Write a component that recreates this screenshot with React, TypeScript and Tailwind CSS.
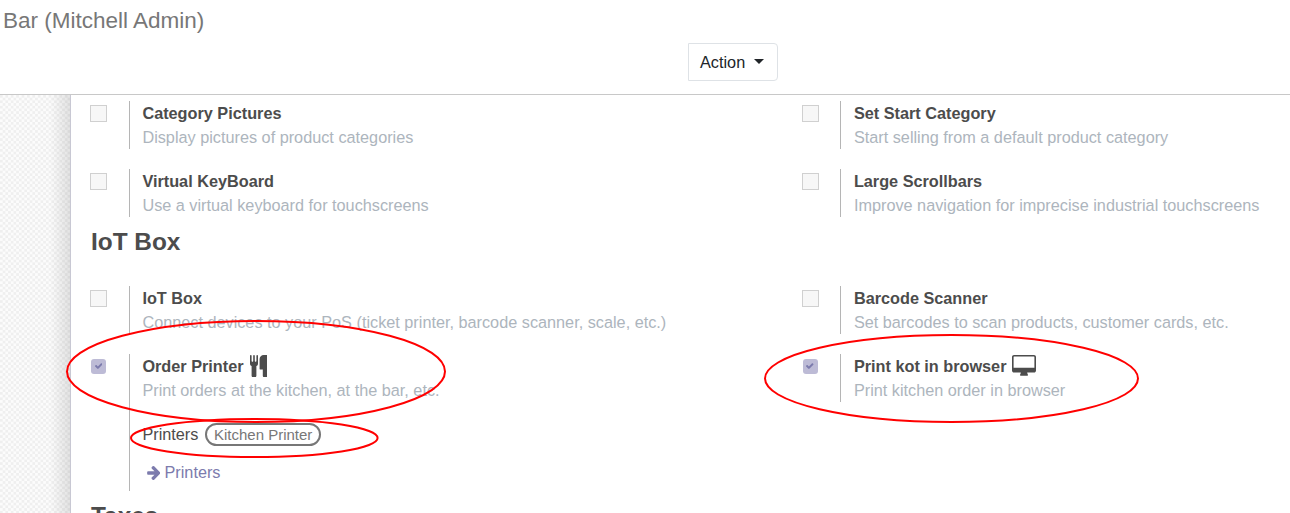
import type { ReactNode } from "react";

function Cutlery() {
  return (
    <svg className="ml-[6px] h-[22.4px] w-[17.6px] shrink-0" viewBox="192 0 1408 1792" fill="currentColor">
      <path d="M832 64v640q0 61-35.5 111t-92.5 70v779q0 52-38 90t-90 38h-128q-52 0-90-38t-38-90v-779q-57-20-92.5-70t-35.5-111v-640q0-26 19-45t45-19 45 19 19 45v416q0 26 19 45t45 19 45-19 19-45v-416q0-26 19-45t45-19 45 19 19 45v416q0 26 19 45t45 19 45-19 19-45v-416q0-26 19-45t45-19 45 19 19 45zm768 0v1600q0 52-38 90t-90 38h-128q-52 0-90-38t-38-90v-512h-224q-13 0-22.5-9.5t-9.5-22.5v-800q0-132 94-226t226-94h256q26 0 45 19t19 45z" />
    </svg>
  );
}

function Desktop() {
  return (
    <svg className="mb-px ml-[6px] h-[20.8px] w-6 shrink-0" viewBox="-64 0 1920 1664" fill="currentColor">
      <path d="M1728 992v-832q0-13-9.5-22.5t-22.5-9.5h-1600q-13 0-22.5 9.5t-9.5 22.5v832q0 13 9.5 22.5t22.5 9.5h1600q13 0 22.5-9.5t9.5-22.5zm128-832v1088q0 66-47 113t-113 47h-544q0 37 16 77.5t32 71 16 43.5q0 26-19 45t-45 19h-512q-26 0-45-19t-19-45q0-14 16-44t32-70 16-78h-544q-66 0-113-47t-47-113v-1088q0-66 47-113t113-47h1600q66 0 113 47t47 113z" />
    </svg>
  );
}

function ArrowRight() {
  return (
    <svg className="mt-px h-[14px] w-[13.5px] shrink-0" viewBox="0 179 1472 1560" fill="currentColor">
      <path d="M1472 960q0 54-37 91l-651 651q-39 37-91 37-51 0-90-37l-75-75q-38-38-38-91t38-91l293-293h-704q-52 0-84.5-37.5t-32.5-90.5v-128q0-53 32.5-90.5t84.5-37.5h704l-293-294q-38-36-38-90t38-90l75-75q38-38 90-38 53 0 91 38l651 651q37 35 37 90z" />
    </svg>
  );
}

function Checkbox({ checked }: { checked?: boolean }) {
  if (checked) {
    return (
      <div className="mt-[5px] ml-px flex h-[15px] w-[15px] items-center justify-center rounded-[3px] bg-[#bdbbd6]">
        <svg className="mb-[2px] h-[6px] w-[7.5px]" viewBox="121 310 1550 1212" fill="#7c7bad">
          <path d="M1671 566q0 40-28 68l-724 724-136 136q-28 28-68 28t-68-28l-136-136-362-362q-28-28-28-68t28-68l136-136q28-28 68-28t68 28l294 295 656-657q28-28 68-28t68 28l136 136q28 28 28 68z" />
        </svg>
      </div>
    );
  }
  return <div className="mt-1 h-[17px] w-[17px] border border-[#d0d0d0] bg-[#f7f7f7]" />;
}

type SettingProps = { title: string; help: string; checked?: boolean; icon?: ReactNode; children?: ReactNode };

function Setting({ title, help, checked, icon, children }: SettingProps) {
  return (
    <div className="flex w-[711.5px] shrink-0 items-start">
      <div className="w-[38.8px] shrink-0">
        <Checkbox checked={checked} />
      </div>
      <div className="border-l border-[#b5b5b5] pl-[12.6px] whitespace-nowrap">
        <div className="flex h-6 items-center font-bold">
          {title}
          {icon}
        </div>
        <div className="h-6 text-[#adb5bd]">{help}</div>
        {children}
      </div>
    </div>
  );
}

export default function App() {
  return (
    <div className="relative flex h-[513px] w-[1290px] flex-col overflow-hidden bg-white font-['Liberation_Sans',Arial,sans-serif] text-[16.25px] leading-6 text-[#4c4c4c]">
      <header className="h-[95px] shrink-0 border-b border-[#c8c8c8]">
        <h1 className="h-[43px] pt-1 pl-[3px] text-[22.5px] leading-[33px] text-[#777777]">Bar (Mitchell Admin)</h1>
        <button className="ml-[688px] flex h-[38px] w-[90px] items-center rounded-r-[4px] border border-[#dee2e6] pl-[11px] text-[#212529]">
          Action
          <span className="mb-[2px] ml-[9px] border-x-[5px] border-t-[5px] border-x-transparent border-t-[#212529]" />
        </button>
      </header>
      <div className="flex min-h-0 flex-1">
        <aside className="relative w-[70px] shrink-0 overflow-hidden">
          <svg className="block h-full w-full">
            <defs>
              <pattern id="checker" width="5.4" height="5.4" patternUnits="userSpaceOnUse">
                <rect width="5.4" height="5.4" fill="#fcfcfc" />
                <rect width="2.7" height="2.7" fill="#efefef" />
                <rect x="2.7" y="2.7" width="2.7" height="2.7" fill="#efefef" />
              </pattern>
            </defs>
            <rect width="100%" height="100%" fill="url(#checker)" />
          </svg>
          <div className="absolute inset-y-0 right-0 w-5 bg-linear-to-r from-transparent to-black/10" />
        </aside>
        <main className="min-w-0 flex-1 border-l border-[#c8c8d3] pt-[6px] pl-[19px]">
          <div className="flex h-12">
            <Setting title="Category Pictures" help="Display pictures of product categories" />
            <Setting title="Set Start Category" help="Start selling from a default product category" />
          </div>
          <div className="mt-5 flex h-12">
            <Setting title="Virtual KeyBoard" help="Use a virtual keyboard for touchscreens" />
            <Setting title="Large Scrollbars" help="Improve navigation for imprecise industrial touchscreens" />
          </div>
          <h2 className="mt-[7px] h-[62px] pl-[1px] text-[24.4px] leading-9 font-bold">IoT Box</h2>
          <div className="flex h-12">
            <Setting title="IoT Box" help="Connect devices to your PoS (ticket printer, barcode scanner, scale, etc.)" />
            <Setting title="Barcode Scanner" help="Set barcodes to scan products, customer cards, etc." />
          </div>
          <div className="mt-5 flex h-[137px] items-start">
            <Setting title="Order Printer" help="Print orders at the kitchen, at the bar, etc." checked icon={<Cutlery />}>
              <div className="mt-5 flex h-6 items-center">
                Printers
                <span className="ml-[6.8px] flex h-[23px] w-[116px] items-center justify-center rounded-full border-2 border-[#777777] pt-[2px] text-[15px] text-[#777777]">
                  Kitchen Printer
                </span>
              </div>
              <div className="mt-[14px] flex h-[31px] items-start pl-[4.6px] text-[#7c7bad]">
                <span className="flex h-6 items-center gap-1">
                  <ArrowRight />
                  Printers
                </span>
              </div>
            </Setting>
            <Setting title="Print kot in browser" help="Print kitchen order in browser" checked icon={<Desktop />} />
          </div>
          <h2 className="mt-[7px] pl-[1px] text-[24.4px] leading-9 font-bold">Taxes</h2>
        </main>
      </div>
      <svg className="pointer-events-none absolute inset-0" width="1290" height="513" fill="none" stroke="#ff0000" strokeWidth="2">
        <ellipse cx="256" cy="371.5" rx="189" ry="50.5" />
        <ellipse cx="254.3" cy="438" rx="123.3" ry="19" />
        <ellipse cx="951.5" cy="378.5" rx="186.5" ry="43.5" />
      </svg>
    </div>
  );
}
